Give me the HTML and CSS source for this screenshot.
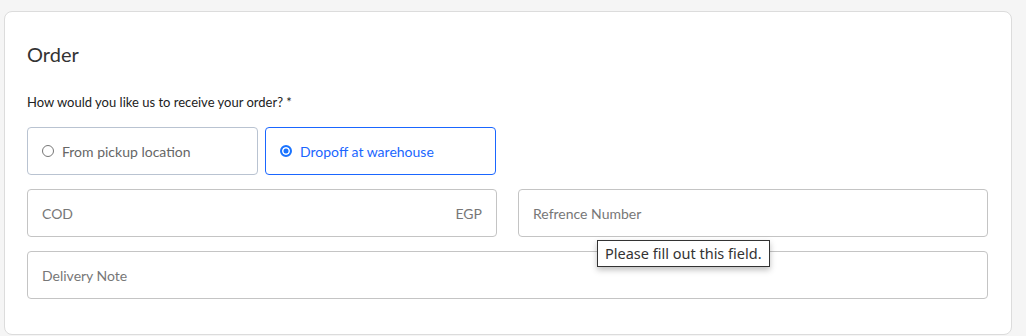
FILE: index.html
```html
<!DOCTYPE html>
<html lang="en">
<head>
  <meta charset="UTF-8">
  <title>Order</title>
  <link rel="stylesheet" href="styles.css">
</head>
<body>

<div class="order-card">
  <h2 class="order-title">Order</h2>

  <div class="field-label">How would you like us to receive your order? *</div>

  <div class="choice-row">
    <label class="choice">
      <span class="radio"></span>
      From pickup location
    </label>
    <label class="choice choice-active">
      <span class="radio radio-on"></span>
      Dropoff at warehouse
    </label>
  </div>

  <div class="input-row">
    <div class="text-input">
      <span class="placeholder">COD</span>
      <span class="suffix">EGP</span>
    </div>
    <div class="text-input ref-input">
      <span class="placeholder">Refrence Number</span>
      <div class="tooltip">Please fill out this field.</div>
    </div>
  </div>

  <div class="text-input">
    <span class="placeholder">Delivery Note</span>
  </div>
</div>

</body>
</html>
```

FILE: styles.css
```css
* {
  margin: 0;
  padding: 0;
  box-sizing: border-box;
}

body {
  font-family: 'Lato', 'Liberation Sans', sans-serif;
  background-color: #f5f5f5;
  padding: 11px 14px 0 4px;
  height: 336px;
  overflow: hidden;
}

.order-card {
  background-color: #fff;
  border: 1px solid #dcdcdc;
  border-radius: 8px;
  padding: 30px 23px 35px 22px;
  height: 324px;
}

.order-title {
  font-size: 20px;
  font-weight: 400;
  color: #333;
  line-height: 24px;
  margin-bottom: 28px;
}

.field-label {
  font-size: 13px;
  color: #222;
  line-height: 16px;
  margin-bottom: 17px;
}

.choice-row {
  display: flex;
  gap: 7px;
  margin-bottom: 14px;
}

.choice {
  width: 231px;
  height: 48px;
  border: 1px solid #b9c3d1;
  border-radius: 4px;
  display: flex;
  align-items: center;
  gap: 8px;
  padding-left: 14px;
  font-size: 14px;
  color: #666;
}

.choice-active {
  border-color: #1a66ff;
  color: #1a66ff;
}

.radio {
  width: 12px;
  height: 12px;
  border: 1px solid #777;
  border-radius: 50%;
  display: inline-block;
}

.radio-on {
  border: 2px solid #1a73ff;
  background-color: #1a73ff;
  box-shadow: inset 0 0 0 1.5px #fff;
}

.input-row {
  display: flex;
  gap: 21px;
  margin-bottom: 14px;
}

.text-input {
  flex: 1;
  height: 48px;
  border: 1px solid #c4c4c4;
  border-radius: 4px;
  display: flex;
  align-items: center;
  justify-content: space-between;
  padding: 0 14px;
  font-size: 14px;
  color: #777;
}

.ref-input {
  position: relative;
}

.tooltip {
  position: absolute;
  left: 78px;
  top: 50px;
  z-index: 2;
  background-color: #fff;
  border: 1px solid #333;
  padding: 3px 7px 4px;
  font-family: 'Noto Sans', 'DejaVu Sans', sans-serif;
  font-size: 14.5px;
  color: #333;
  white-space: nowrap;
  box-shadow: 0 3px 6px rgba(0, 0, 0, 0.25);
  line-height: 18px;
}
```
